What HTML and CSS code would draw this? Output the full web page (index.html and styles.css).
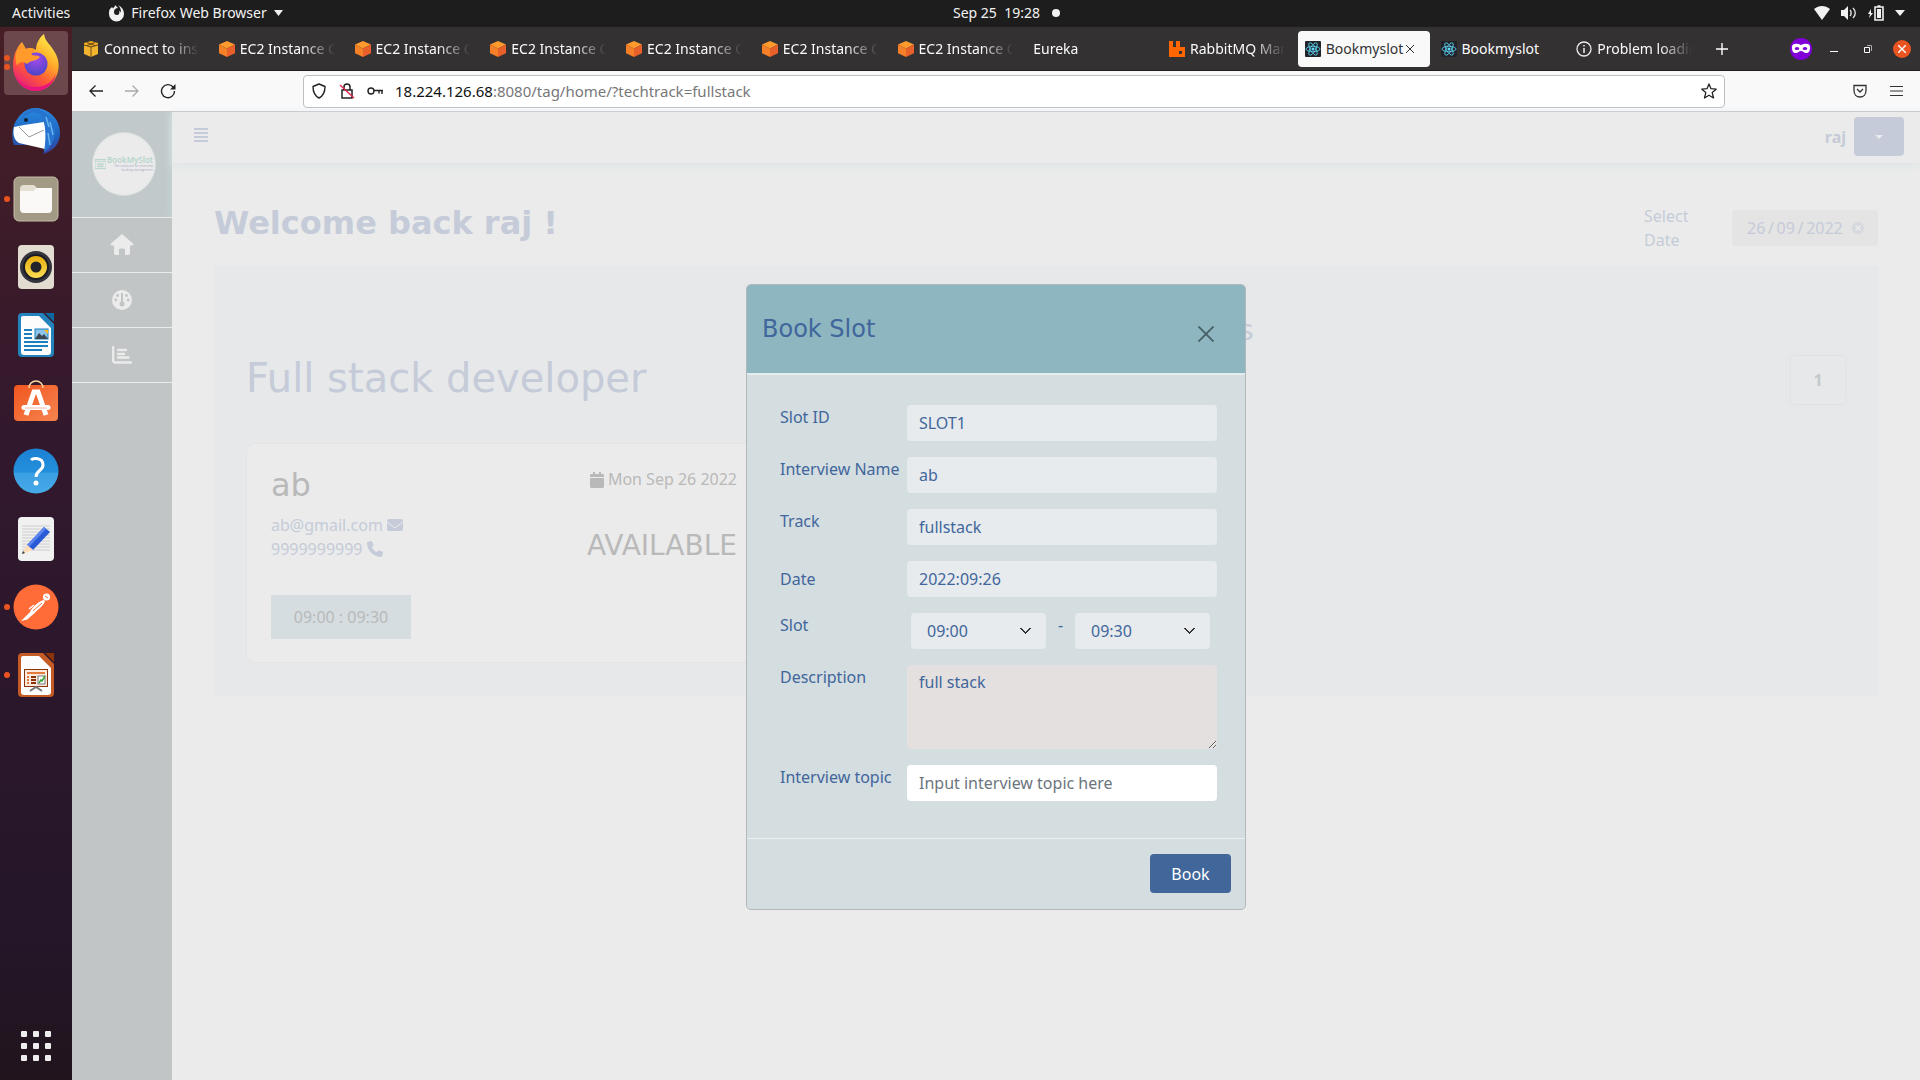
FILE: index.html
```html
<!DOCTYPE html>
<html lang="en">
<head>
<meta charset="utf-8">
<title>Bookmyslot</title>
<link rel="stylesheet" href="styles.css">
</head>
<body>
<svg class="defs" aria-hidden="true">
  <defs>
    <linearGradient id="flame" x1="0.8" y1="0" x2="0.2" y2="1"><stop offset="0" stop-color="#fff14f"/><stop offset=".35" stop-color="#ffb02a"/><stop offset=".65" stop-color="#ff5a36"/><stop offset="1" stop-color="#e31587"/></linearGradient>
    <radialGradient id="globe" cx=".5" cy=".3" r=".7"><stop offset="0" stop-color="#a44ae8"/><stop offset="1" stop-color="#4b45c9"/></radialGradient>
    <linearGradient id="bird" x1="0" y1="0" x2="0" y2="1"><stop offset="0" stop-color="#2a8ae0"/><stop offset=".6" stop-color="#1d62bd"/><stop offset="1" stop-color="#39409c"/></linearGradient>
    <linearGradient id="help" x1="0" y1="0" x2="0" y2="1"><stop offset="0" stop-color="#1c80d3"/><stop offset=".53" stop-color="#2390dc"/><stop offset=".54" stop-color="#3a9fe3"/><stop offset="1" stop-color="#46a9e8"/></linearGradient>
    <linearGradient id="bag" x1="0" y1="0" x2="1" y2="1"><stop offset="0" stop-color="#f2561f"/><stop offset="1" stop-color="#f58450"/></linearGradient>
    <linearGradient id="cone" x1="0" y1="0" x2="0" y2="1"><stop offset="0" stop-color="#e8ad0c"/><stop offset="1" stop-color="#fbdc55"/></linearGradient>
    <symbol id="cube" viewBox="0 0 16 16"><path d="M8 0l8 3.600L8 7.500 0 3.600z" fill="#ff9a2e"/><path d="M0 3.600l8 3.900V16l-8-3.700z" fill="#f58027"/><path d="M16 3.600L8 7.500V16l8-3.700z" fill="#e9602a"/></symbol>
    <symbol id="react" viewBox="0 0 16 16"><rect width="16" height="16" rx="1" fill="#20232a"/><g fill="none" stroke="#61dafb" stroke-width=".8"><ellipse cx="8" cy="8" rx="7" ry="2.700"/><ellipse cx="8" cy="8" rx="7" ry="2.700" transform="rotate(60 8 8)"/><ellipse cx="8" cy="8" rx="7" ry="2.700" transform="rotate(120 8 8)"/></g><circle cx="8" cy="8" r="1.500" fill="#61dafb"/></symbol>
  </defs>
</svg>

<header class="topbar">
  <div class="topbar-left">
    <span>Activities</span>
    <span class="app-menu">
      <svg width="16" height="18" viewBox="0 0 16 18"><path d="M2 5l2-2 1 1.500C6 3 7 3 7 1l3 3c-2 0-4 1-4 4 0 2 1 3 3 3s3-2 2-4c1 0 2 1 2 2 0-4-1-6-3-8 4 2 6 5 6 9a7 7 0 0 1-15 0c0-2 0-4 1-5z" fill="#f2f2f2"/></svg>
      Firefox Web Browser
      <svg width="9" height="6" viewBox="0 0 9 6"><path d="M0 0h9L4.500 6z" fill="#f2f2f2"/></svg>
    </span>
  </div>
  <div class="clock">Sep 25&nbsp; 19:28 <span class="notice"></span></div>
  <div class="tray">
    <svg width="16" height="14" viewBox="0 0 16 14"><path d="M0 3c5-4 11-4 16 0L8 14z" fill="#f2f2f2"/></svg>
    <svg width="16" height="14" viewBox="0 0 16 14"><path d="M0 4h3l4-4v14l-4-4H0z" fill="#f2f2f2"/><path d="M9 4c1.500 1.500 1.500 4.500 0 6M12 2c3 3 3 7 0 10" fill="none" stroke="#d8d8d8" stroke-width="1.500"/></svg>
    <svg width="16" height="16" viewBox="0 0 16 16"><path d="M3 4L0 9h2l-1 4 4-5H3z" fill="#f2f2f2"/><path d="M7 2h8v13H7zM9.500 1h3" fill="none" stroke="#f2f2f2" stroke-width="1.600"/><path d="M9 4h4v9H9z" fill="#f2f2f2"/></svg>
    <svg width="10" height="6" viewBox="0 0 10 6"><path d="M0 0h10L5 6z" fill="#f2f2f2"/></svg>
  </div>
</header>

<div class="desktop">
  <nav class="dock" aria-label="Dock">
    <a href="#" class="dock-item current two" aria-label="Firefox">
      <svg width="48" height="58" viewBox="0 0 48 58"><path d="M5 15c1-3 3-5 5-7l4 7c4-2 7-1 10 1 0-6 3-12 8-16 1 8 7 11 10 17 6 8 6 20 1 28-4 7-11 12-19 12C11 57 1 46 1 32 1 25 2 20 5 15z" fill="url(#flame)"/><path d="M2 38c3 10 12 16 22 15 10 0 17-6 20-13-3 11-11 17-20 17C14 57 5 49 2 38z" fill="#e9157d"/><circle cx="24" cy="30" r="11.500" fill="url(#globe)"/><path d="M5 16c2-2 5-3 9-1 3-2 7-1 9 1-3 1-4 3-3 5 3 1 6 0 8 2-3 4-9 3-13 7-3-3-8-3-10 2-2-5-2-11 0-16z" fill="#ff9a2b"/></svg>
    </a>
    <a href="#" class="dock-item" aria-label="Thunderbird">
      <svg width="48" height="48" viewBox="0 0 48 48"><path d="M24 1C34 1 48 10 48 26c0 10-6 18-17 21 2-4 2-7 0-9L2 38C-1 30 0 18 6 11 10 5 16 1 24 1z" fill="url(#bird)"/><path d="M2 20l10-2 20-3c2 8 5 14 1 27L7 36C1 32 1 26 2 20z" fill="#fff"/><path d="M7 20l10 10 15-7" fill="none" stroke="#999" stroke-width="1"/><path d="M9 16C11 7 22 2 29 8c4 5 6 20 3 37 5-3 10-9 11-18C44 12 32 1 20 1 15 3 8 9 9 16z" fill="#2674cf"/><path d="M34 10l3 10M38 15l3 13M36 26l2 12" stroke="#69b3ef" stroke-width="1.500"/><circle cx="14" cy="13" r="2" fill="#123"/></svg>
    </a>
    <a href="#" class="dock-item one" aria-label="Files">
      <svg width="46" height="46" viewBox="0 0 46 46"><rect x="1" y="1" width="44" height="44" rx="5" fill="#a39a85" stroke="#c3bba9"/><path d="M7 13a4 4 0 0 1 4-4h10l4 4v4H7z" fill="#e4dfd0"/><path d="M7 15h13l4-3h15v21a4 4 0 0 1-4 4H11a4 4 0 0 1-4-4z" fill="#faf9f8"/></svg>
    </a>
    <a href="#" class="dock-item" aria-label="Rhythmbox">
      <svg width="38" height="46" viewBox="0 0 38 46"><rect x="1" y="1" width="36" height="44" rx="4" fill="#e3ddd1"/><circle cx="19" cy="23" r="16" fill="#34343e"/><circle cx="19" cy="23" r="13" fill="#191b24"/><circle cx="19" cy="23" r="11" fill="url(#cone)"/><circle cx="19" cy="23" r="5.500" fill="#222429"/></svg>
    </a>
    <a href="#" class="dock-item" aria-label="LibreOffice Writer">
      <svg width="38" height="46" viewBox="0 0 38 46"><path d="M5 1h21l11 11v29a4 4 0 0 1-4 4H5a4 4 0 0 1-4-4V5a4 4 0 0 1 4-4z" fill="#2384bd"/><path d="M28 1h9v9z" fill="#0b68a0"/><path d="M6 4h16l12 12v24a3 3 0 0 1-3 3H7a3 3 0 0 1-3-3V6a2 2 0 0 1 2-2z" fill="#fcfcfc"/><path d="M7 18h8M7 22h8M7 26h8M7 30h24M7 34h24M7 38h18" stroke="#1b7fbd" stroke-width="2"/><rect x="18" y="17" width="13" height="10" fill="#8bc4ec" stroke="#1b7fbd"/><path d="M18 27l4-6 3 3 2-2 4 5z" fill="#3c4550"/><path d="M27 18h4v4z" fill="#fbb917"/></svg>
    </a>
    <a href="#" class="dock-item" aria-label="Ubuntu Software">
      <svg width="46" height="46" viewBox="0 3 46 46"><rect x="1" y="8" width="44" height="36" rx="4" fill="url(#bag)"/><path d="M16 11a7 7 0 0 1 14 0" fill="none" stroke="#f8d9a5" stroke-width="1.600"/><path d="M13 38l8-23h4l8 23" fill="none" stroke="#fff" stroke-width="5"/><path d="M11 30.500h24" stroke="#fff" stroke-width="5" stroke-linecap="round"/><path d="M12 31h22" stroke="#f3b7ac"/></svg>
    </a>
    <a href="#" class="dock-item" aria-label="Help">
      <svg width="46" height="46" viewBox="0 0 46 46"><circle cx="23" cy="23" r="22.500" fill="url(#help)"/><path d="M18 12c2-2 12-3 12 5 0 6-7 5-7 12" fill="none" stroke="#fff" stroke-width="3"/><circle cx="23" cy="35" r="2.500" fill="#fff"/></svg>
    </a>
    <a href="#" class="dock-item" aria-label="Text Editor">
      <svg width="38" height="46" viewBox="0 0 38 46"><rect x="1" y="1" width="36" height="44" rx="4" fill="#f1f1f1"/><path d="M5 10h28M5 13h28M5 16h28M5 19h28M5 22h28M5 25h28M5 28h28M5 31h28M5 34h28" stroke="#ccc"/><path d="M10 29L27 11l6 5-17 18z" fill="#2a5bd7"/><path d="M10 29L27 11l2 2-17 18z" fill="#5b86ee"/><path d="M10 29l6 5-11 4z" fill="#fddcb8"/><path d="M6 35l2 2-3 1z" fill="#333"/></svg>
    </a>
    <a href="#" class="dock-item one" aria-label="Postman">
      <svg width="46" height="46" viewBox="0 0 46 46"><circle cx="23" cy="23" r="22.500" fill="#ff6c37"/><circle cx="33.500" cy="13" r="3.600" fill="#fff"/><path d="M31 16c-5 1-10 6-14 11l4 2c5-4 10-8 11-12z" fill="#fff"/><path d="M19 27l-9 9 4-1 9-8M16 25l5-4" fill="#fff" stroke="#fff" stroke-width="1.200"/><path d="M20 27l9-8M32 12l3 2" stroke="#ff6c37"/></svg>
    </a>
    <a href="#" class="dock-item one" aria-label="LibreOffice Impress">
      <svg width="38" height="46" viewBox="0 0 38 46"><path d="M5 1h21l11 11v29a4 4 0 0 1-4 4H5a4 4 0 0 1-4-4V5a4 4 0 0 1 4-4z" fill="#c45a24"/><path d="M28 1h9v9z" fill="#8a3208"/><path d="M6 4h16l12 12v24a3 3 0 0 1-3 3H7a3 3 0 0 1-3-3V6a2 2 0 0 1 2-2z" fill="#fcfcfc"/><rect x="7.500" y="17.500" width="23" height="17" fill="#fbeadd" stroke="#8a3208"/><path d="M10 21h18" stroke="#e27b3c" stroke-width="2"/><path d="M14 25h5M14 28h5M14 31h5" stroke="#8a3208" stroke-width="2"/><path d="M10 25h2M10 28h2M10 31h2" stroke="#e27b3c" stroke-width="2"/><rect x="21" y="24" width="7" height="8" fill="#fff" stroke="#777"/><path d="M22 31l2-3 1 1 3-5" fill="none" stroke="#36a436" stroke-width="1.500"/><path d="M13 39l6-4 6 4" fill="none" stroke="#777" stroke-width="2"/></svg>
    </a>
    <a href="#" class="dock-item apps" aria-label="Show Applications">
      <svg width="30" height="30" viewBox="0 0 30 30" fill="#f0edef"><rect width="6" height="6" rx="1"/><rect x="12" width="6" height="6" rx="1"/><rect x="24" width="6" height="6" rx="1"/><rect y="12" width="6" height="6" rx="1"/><rect x="12" y="12" width="6" height="6" rx="1"/><rect x="24" y="12" width="6" height="6" rx="1"/><rect y="24" width="6" height="6" rx="1"/><rect x="12" y="24" width="6" height="6" rx="1"/><rect x="24" y="24" width="6" height="6" rx="1"/></svg>
    </a>
  </nav>

  <div class="browser">
    <div class="tabstrip">
      <div class="tabs">
        <a href="#" class="tab"><svg width="16" height="16" viewBox="0 0 16 16"><path d="M8 0l7 2v2L8 6 1 4V2z" fill="#f0a81e"/><path d="M1 4l7 2v10l-7-3zM15 4L8 6v10l7-3z" fill="#f2b32f"/><path d="M1 4l7 2 7-2M8 6v10M4 1.500l8 3M12 1.500l-8 3" fill="none" stroke="#4a3713" stroke-width=".8"/></svg><span class="tab-title">Connect to instance</span></a>
        <a href="#" class="tab"><svg width="16" height="16"><use href="#cube"/></svg><span class="tab-title">EC2 Instance Connect</span></a>
        <a href="#" class="tab"><svg width="16" height="16"><use href="#cube"/></svg><span class="tab-title">EC2 Instance Connect</span></a>
        <a href="#" class="tab"><svg width="16" height="16"><use href="#cube"/></svg><span class="tab-title">EC2 Instance Connect</span></a>
        <a href="#" class="tab"><svg width="16" height="16"><use href="#cube"/></svg><span class="tab-title">EC2 Instance Connect</span></a>
        <a href="#" class="tab"><svg width="16" height="16"><use href="#cube"/></svg><span class="tab-title">EC2 Instance Connect</span></a>
        <a href="#" class="tab"><svg width="16" height="16"><use href="#cube"/></svg><span class="tab-title">EC2 Instance Connect</span></a>
        <a href="#" class="tab"><span class="tab-title">Eureka</span></a>
        <a href="#" class="tab"><svg width="16" height="16" viewBox="0 0 16 16"><path d="M0 0h4v6h3V0h4v6h5v10H0zM10 10v3h3v-3z" fill="#f60" fill-rule="evenodd"/></svg><span class="tab-title">RabbitMQ Management</span></a>
        <div class="tab active"><svg width="16" height="16"><use href="#react"/></svg><span class="tab-name">Bookmyslot</span><button class="tab-close" aria-label="Close tab"><svg width="8" height="8" viewBox="0 0 8 8"><path d="M0 0l8 8M8 0L0 8" stroke="#333"/></svg></button></div>
        <a href="#" class="tab"><svg width="16" height="16"><use href="#react"/></svg><span class="tab-name">Bookmyslot</span></a>
        <a href="#" class="tab"><svg width="16" height="16" viewBox="0 0 16 16"><circle cx="8" cy="8" r="7" fill="none" stroke="#eee" stroke-width="1.300"/><path d="M8 7v5M8 4v1.500" stroke="#eee" stroke-width="1.500"/></svg><span class="tab-title">Problem loading page</span></a>
      </div>
      <div class="window-controls">
        <button aria-label="New tab"><svg width="12" height="12" viewBox="0 0 12 12"><path d="M6 0v12M0 6h12" stroke="#fff" stroke-width="1.400"/></svg></button>
        <svg class="mask" width="22" height="22" viewBox="0 0 22 22"><circle cx="11" cy="11" r="11" fill="#8000d7"/><path d="M2 9c0-4 5-4 9-2 4-2 9-2 9 2s-1 6-4 6c-2 0-3-2-5-2s-3 2-5 2c-3 0-4-2-4-6z" fill="#fff"/><ellipse cx="7" cy="10.500" rx="2.300" ry="1.500" fill="#8000d7"/><ellipse cx="15" cy="10.500" rx="2.300" ry="1.500" fill="#8000d7"/></svg>
        <button aria-label="Minimize"><svg width="8" height="8" viewBox="0 0 8 8"><path d="M0 6.500h8" stroke="#fff"/></svg></button>
        <button aria-label="Restore"><svg width="8" height="8" viewBox="0 0 8 8"><path d="M.5 2.500h5v5h-5z" fill="none" stroke="#fff"/><path d="M3 .5h4.500V6" fill="none" stroke="#aaa"/></svg></button>
        <button class="close-window" aria-label="Close"><svg width="8" height="8" viewBox="0 0 8 8"><path d="M0 0l8 8M8 0L0 8" stroke="#fff" stroke-width="1.400"/></svg></button>
      </div>
    </div>

    <div class="toolbar">
      <div class="nav-buttons">
        <button aria-label="Back"><svg width="16" height="16" viewBox="0 0 16 16"><path d="M15 8H2M7.500 2.500L2 8l5.500 5.500" fill="none" stroke="#222" stroke-width="1.300"/></svg></button>
        <button aria-label="Forward"><svg width="16" height="16" viewBox="0 0 16 16"><path d="M1 8h13M8.500 2.500L14 8l-5.500 5.500" fill="none" stroke="#aaa" stroke-width="1.300"/></svg></button>
        <button aria-label="Reload"><svg width="16" height="16" viewBox="0 0 16 16"><path d="M13 4a6.500 6.500 0 1 0 1.500 4" fill="none" stroke="#222" stroke-width="1.400"/><path d="M15.500 1v5.500H10z" fill="#222"/></svg></button>
      </div>
      <div class="urlbar">
        <svg width="16" height="16" viewBox="0 0 16 16"><path d="M8 1l6 2.500c0 6-2 9.500-6 11.500-4-2-6-5.500-6-11.500z" fill="none" stroke="#222" stroke-width="1.400" stroke-linejoin="round"/></svg>
        <svg width="16" height="16" viewBox="0 0 16 16"><path d="M3 7h10v8H3zM5 7V4a3 3 0 0 1 6 0v3" fill="none" stroke="#222" stroke-width="1.500"/><path d="M1 2l14 13" stroke="#e22850" stroke-width="1.500"/></svg>
        <svg width="16" height="16" viewBox="0 0 16 16"><circle cx="4" cy="8" r="3" fill="none" stroke="#222" stroke-width="1.400"/><path d="M7 7.500h9M12 8v2.500M15 8v3" fill="none" stroke="#222" stroke-width="1.400"/></svg>
        <span class="url"><b>18.224.126.68</b>:8080/tag/home/?techtrack=fullstack</span>
        <svg width="16" height="16" viewBox="0 0 16 16"><path d="M8 1l2 4.700 5.200.5-4 3.400 1.300 5.400L8 12.200 3.500 15l1.300-5.400-4-3.400 5.200-.5z" fill="none" stroke="#222" stroke-width="1.300" stroke-linejoin="round"/></svg>
      </div>
      <div class="tool-buttons">
        <button aria-label="Save to Pocket"><svg width="14" height="14" viewBox="0 0 14 14"><path d="M1 1.500h12v5c0 4-2.500 6.500-6 6.500s-6-2.500-6-6.500zM4 5l3 3 3-3" fill="none" stroke="#333" stroke-width="1.300"/></svg></button>
        <button aria-label="Open menu"><svg width="13" height="12" viewBox="0 0 13 12"><path d="M0 1.500h13M0 6h13M0 10.500h13" stroke="#333" stroke-width="1.200"/></svg></button>
      </div>
    </div>

    <div class="page">
      <aside class="sidebar">
        <div class="brand">
          <div class="brand-disc">
            <svg width="11" height="12" viewBox="0 0 12 12"><path d="M0 1h12v10H0zM0 3h12M2 6h8M2 8.500h8M4.500 5v5M7.500 5v5" fill="none" stroke="#b3d3ca"/></svg>
            <div><div class="brand-name">BookMySlot</div><div class="brand-tag">The solutions for interview<br>booking management</div></div>
          </div>
        </div>
        <a href="#" class="side-link" aria-label="Home"><svg width="24" height="22" viewBox="0 0 24 22"><path d="M12 0l11 9.500c1 1 .3 2-1 2h-2V19c0 1-.7 2-2 2h-3v-5c0-1-.5-1.500-1.500-1.500h-3C9.500 14.500 9 15 9 16v5H6c-1.300 0-2-1-2-2v-7.500H2c-1.300 0-2-1-1-2z" fill="#ebebeb"/></svg></a>
        <a href="#" class="side-link" aria-label="Dashboard"><svg width="20" height="20" viewBox="0 0 20 20"><circle cx="10" cy="10" r="10" fill="#ebebeb"/><path d="M10 3v11" stroke="#c1c5c6" stroke-width="2"/><g fill="#c1c5c6"><circle cx="10" cy="14" r="2.500"/><circle cx="5.500" cy="5.500" r="1.400"/><circle cx="14.500" cy="5.500" r="1.400"/><circle cx="3.800" cy="10" r="1.400"/><circle cx="16.200" cy="10" r="1.400"/></g></svg></a>
        <a href="#" class="side-link" aria-label="Reports"><svg width="20" height="18" viewBox="0 0 20 18"><path d="M1.200 1v13.500c0 1.500.8 2 2 2H19M6 4h8M6 8h6M6 11.500h10.500" fill="none" stroke="#ebebeb" stroke-width="2.300" stroke-linecap="round"/></svg></a>
      </aside>

      <div class="main">
        <div class="page-header">
          <button class="menu-toggle" aria-label="Toggle sidebar"><svg width="14" height="14" viewBox="0 0 14 14"><path d="M0 1h14M0 5h14M0 9h14M0 13h14" stroke="#c5cbd8" stroke-width="2"/></svg></button>
          <div class="account"><b>raj</b><button class="account-menu" aria-label="Account menu"><svg width="8" height="4" viewBox="0 0 8 4"><path d="M0 0h8L4 4z" fill="#ebebeb"/></svg></button></div>
        </div>
        <main class="content">
          <div class="title-row">
            <h1>Welcome back raj !</h1>
            <div class="date-picker">
              <label for="day">Select Date</label>
              <div class="date-box">
                <input id="day" type="text" value="26&#8201;/&#8201;09&#8201;/&#8201;2022">
                <button aria-label="Clear date"><svg width="12" height="12" viewBox="0 0 12 12"><circle cx="6" cy="6" r="6" fill="#d5d8de"/><path d="M3.500 3.500l5 5M8.500 3.500l-5 5" stroke="#ececec" stroke-width="1.400"/></svg></button>
              </div>
            </div>
          </div>
          <section class="panel">
            <div class="track">
              <h2>Full stack developer</h2>
              <article class="card">
                <div class="card-top">
                  <div>
                    <h3>ab</h3>
                    <p class="contact">ab@gmail.com <svg width="16" height="12" viewBox="0 0 16 12"><rect width="16" height="12" rx="2" fill="#c5cbd8"/><path d="M0 3l8 6 8-6" fill="none" stroke="#ebebeb"/></svg></p>
                    <p class="contact">9999999999 <svg width="16" height="16" viewBox="0 0 16 16"><path d="M1 1l3-1c.5 0 1 .2 1.200.7l1.300 3c.2.500 0 1-.3 1.300L4.700 6.300C5.700 8.500 7.500 10.300 9.700 11.300L11 9.800c.3-.4.800-.5 1.300-.3l3 1.300c.5.2.7.7.7 1.200l-1 3c-.1.600-.5 1-1 1C6.500 16 0 9.500 0 2c0-.5.400-.9 1-1z" fill="#c5cbd8"/></svg></p>
                  </div>
                  <div class="status">
                    <p><svg width="14" height="16" viewBox="0 0 14 16"><path d="M3 0h2v2h4V0h2v2h1.500c.8 0 1.500.7 1.500 1.500V5H0V3.500C0 2.700.7 2 1.500 2H3zM0 6h14v8.500c0 .8-.7 1.500-1.500 1.500h-11C.7 16 0 15.300 0 14.500z" fill="#b9b9b9"/></svg> Mon Sep 26 2022</p>
                    <h4>AVAILABLE</h4>
                  </div>
                </div>
                <button class="time">09:00 : 09:30</button>
              </article>
            </div>
            <div class="slots">
              <h4>Available slots</h4>
              <button class="count">1</button>
            </div>
          </section>
        </main>
      </div>

      <div class="overlay">
        <form class="modal" role="dialog" aria-labelledby="modal-title">
          <div class="modal-header">
            <h4 id="modal-title">Book Slot</h4>
            <button type="button" class="modal-close" aria-label="Close"><svg width="16" height="16" viewBox="0 0 16 16"><path d="M.5.500l15 15M15.500.500l-15 15" stroke="#475f64" stroke-width="1.800"/></svg></button>
          </div>
          <div class="modal-body">
            <label for="slot-id">Slot ID</label><input id="slot-id" value="SLOT1" readonly>
            <label for="name">Interview Name</label><input id="name" value="ab" readonly>
            <label for="track">Track</label><input id="track" value="fullstack" readonly>
            <label for="date" class="middle">Date</label><input id="date" value="2022:09:26" readonly>
            <label for="from">Slot</label>
            <div class="range"><select id="from"><option>09:00</option></select><span>-</span><select aria-label="Slot end"><option>09:30</option></select></div>
            <label for="description">Description</label><textarea id="description" readonly>full stack</textarea>
            <label for="topic">Interview topic</label><input id="topic" class="editable" placeholder="Input interview topic here">
          </div>
          <div class="modal-footer"><button type="button" class="book">Book</button></div>
        </form>
      </div>
    </div>
  </div>
</div>
</body>
</html>
```
FILE: styles.css
```css
* { box-sizing: border-box; }
body {
  margin: 0;
  min-height: 100vh;
  display: flex;
  flex-direction: column;
  font: 14px/20px "Noto Sans", "Open Sans", sans-serif;
  background: #ebebeb;
}
h1, h2, h3, h4, p { margin: 0; font-weight: 400; }
h1, h2, h3, h4 { font-family: "DejaVu Sans", sans-serif; }
button { border: 0; padding: 0; background: none; font: inherit; color: inherit; display: flex; align-items: center; justify-content: center; }
input, select, textarea { border: 0; font: inherit; color: inherit; min-width: 0; }
a { color: inherit; text-decoration: none; }
svg { flex: none; }
.defs { position: absolute; width: 0; height: 0; }

/* Desktop panel */
.topbar { height: 27px; padding: 0 15px 1px 12px; display: grid; grid-template-columns: 1fr auto 1fr; align-items: center; background: #1d1d1d; color: #f2f2f2; }
.topbar-left { display: flex; gap: 38px; }
.app-menu { display: flex; align-items: center; gap: 7px; }
.clock { display: flex; align-items: center; gap: 12px; padding-left: 96px; }
.notice { width: 8px; height: 8px; border-radius: 50%; background: #f2f2f2; }
.tray { display: flex; justify-content: flex-end; align-items: center; gap: 11px; }

.desktop { flex: 1; display: flex; }
.dock { width: 72px; padding: 4px; display: flex; flex-direction: column; gap: 4px; background: linear-gradient(#471f25, #32182d 40%, #25162a 85%, #21141d); }
.dock-item { position: relative; height: 64px; display: flex; align-items: center; justify-content: center; border-radius: 4px; }
.dock-item.current { background: #6c484d; }
.dock-item.one::before, .dock-item.two::before { content: ""; position: absolute; left: 0; width: 6px; height: 6px; border-radius: 50%; background: #e95420; }
.dock-item.two::before { top: 24px; box-shadow: 0 9px #e95420; }
.dock-item.apps { margin-top: auto; margin-bottom: -2px; }

/* Browser */
.browser { flex: 1; min-width: 0; display: flex; flex-direction: column; }
.tabstrip { height: 44px; padding-left: 2px; display: flex; align-items: center; background: #333132; border-bottom: 1px solid #1f1d1e; color: #fbfbfb; }
.tabs { flex: 1; min-width: 0; display: flex; }
.tab { flex: 1; min-width: 0; height: 36px; margin: 0 2px; padding: 1px 0 0 7px; display: flex; align-items: center; gap: 5px; border-radius: 4px; }
.tab.active { background: #f9f9fa; color: #333; }
.tab-title { flex: 1; margin-right: 9px; overflow: hidden; white-space: nowrap; mask-image: linear-gradient(to left, transparent, #000 32px); }
.tab-close { margin-left: -2px; }
.window-controls { display: flex; align-items: center; padding: 0 9px 0 13px; }
.window-controls .mask { margin: 0 18px 0 62px; }
.window-controls button + button { margin-left: 26px; }
.window-controls .close-window { width: 18px; height: 18px; border-radius: 50%; background: #e95420; }
.window-controls button + .close-window { margin-left: 21px; }
.toolbar { height: 41px; display: flex; align-items: center; background: #f9f9fa; border-bottom: 1px solid #c4c4c6; }
.nav-buttons { width: 231px; padding-left: 16px; display: flex; gap: 20px; }
.urlbar { flex: 1; height: 33px; padding: 0 7px; display: flex; align-items: center; gap: 12px; background: #fff; border: 1px solid #bfbfc1; border-radius: 4px; }
.url { flex: 1; font-size: 15px; color: #777; }
.url b { color: #111; font-weight: 400; }
.tool-buttons { width: 195px; padding-right: 17px; display: flex; justify-content: flex-end; gap: 23px; }

/* Application page */
.page { position: relative; flex: 1; display: flex; font-size: 16px; line-height: 24px; color: #c5cbd8; }
.sidebar { width: 100px; background: #c1c5c6; }
.brand { height: 106px; padding: 0 0 2px 4px; display: flex; align-items: center; justify-content: center; background: #c1c9ca; border-bottom: 1px solid #ebebeb; box-shadow: inset -8px 0 8px -6px #c3d5d3; }
.brand-disc { width: 64px; height: 64px; border: 1px solid #d9dcdd; border-radius: 50%; display: flex; align-items: center; justify-content: center; gap: 1px; background: #ebebeb; }
.brand-name { color: #b3d3ca; font: 600 8px/9px "Open Sans", sans-serif; }
.brand-tag { color: #b9b9cc; font: 600 3px/4px "Open Sans", sans-serif; text-align: right; }
.side-link { height: 55px; display: flex; align-items: center; justify-content: center; border-bottom: 1px solid #ebebeb; }
.main { flex: 1; min-width: 0; background: #ebebeb; }
.page-header { height: 51px; padding: 0 16px 2px 22px; display: flex; align-items: center; justify-content: space-between; box-shadow: 0 2px 8px #dbe5e5; }
.menu-toggle { margin-bottom: 4px; }
.account { display: flex; align-items: center; gap: 8px; }
.account-menu { width: 50px; height: 39px; border-radius: 4px; background: #c5cbd8; }
.content { padding: 41px 42px 24px; }
.title-row { height: 48px; margin-bottom: 14px; display: flex; align-items: center; justify-content: space-between; }
h1 { font-size: 32px; line-height: 38px; font-weight: 700; margin-bottom: 10px; }
.date-picker { display: flex; align-items: center; gap: 33px; }
.date-picker label { width: 55px; }
.date-box { width: 146px; height: 36px; padding: 0 14px 0 15px; display: flex; align-items: center; justify-content: space-between; background: #e4e4e4; border-radius: 4px; }
.date-box input { width: 104px; padding: 0; background: none; }
.panel { min-height: 430px; padding: 47px 32px 32px; display: flex; background: #e6e8ea; }
.track { width: 516px; padding-top: 41px; }
h2 { font-size: 40px; line-height: 48px; margin-bottom: 41px; }
.card { padding: 21px 24px 23px; background: #ebebeb; border: 1px solid #e2e4e6; border-radius: 8px; }
.card-top { display: flex; justify-content: space-between; }
h3 { font-size: 32px; line-height: 40px; margin-bottom: 8px; color: #b9b9b9; }
.contact { display: flex; align-items: center; gap: 4px; }
.status { padding-top: 2px; text-align: right; color: #b9b9b9; }
.status svg { vertical-align: -3px; }
.status h4 { margin-top: 37px; }
h4 { font-size: 28px; line-height: 36px; }
.time { width: 140px; height: 44px; margin-top: 31px; background: #d5dde0; color: #b9b9b9; }
.slots { flex: 1; display: flex; flex-direction: column; padding-left: 291px; }
.count { width: 56px; height: 50px; margin: 6px 0 0 auto; border: 1px solid #e1e2e3; border-radius: 4px; box-shadow: 0 0 4px 2px #e4e7e7; font-weight: 700; color: #c4c9cb; }

/* Booking dialog */
.overlay { position: absolute; inset: 0; padding-top: 2px; display: flex; align-items: center; justify-content: center; }
.modal { width: 500px; background: #d4dde0; color: #41669b; border: 1px solid #b2b7ba; border-radius: 5px; overflow: hidden; }
.modal-header { height: 90px; padding: 0 31px 0 15px; display: flex; align-items: center; justify-content: space-between; background: #8db6c0; border-bottom: 2px solid #e6ebed; }
.modal-header h4 { font-size: 24px; line-height: 28px; }
.modal-close { margin-top: 10px; }
.modal-body { padding: 30px 28px 37px 33px; display: grid; grid-template-columns: 117px 1fr; column-gap: 10px; row-gap: 16px; align-items: start; }
.modal-body label { white-space: nowrap; }
.modal-body .middle { align-self: center; }
.modal-body input, .modal-body textarea, .modal-body select { height: 36px; padding: 0 12px; background-color: #e7ebee; border-radius: 4px; }
.modal-body textarea { height: 84px; padding: 5px 12px; display: block; background-color: #e4e0df; }
.modal-body .editable { background-color: #fff; }
.editable::placeholder { color: #6c757d; }
.range { padding: 0 7px 0 4px; display: grid; grid-template-columns: 1fr 29px 1fr; text-align: center; }
.modal-body select { appearance: none; width: 100%; padding: 0 16px; background-image: linear-gradient(45deg, transparent 45%, #333 45% 60%, transparent 60%), linear-gradient(-45deg, transparent 45%, #333 45% 60%, transparent 60%); background-size: 6px 6px; background-position: right 20px center, right 15px center; background-repeat: no-repeat; }
.modal-footer { height: 71px; padding: 15px 14px; display: flex; justify-content: flex-end; border-top: 1px solid #edf0f1; }
.book { width: 81px; height: 39px; border-radius: 4px; background: #416699; color: #fff; }
```
